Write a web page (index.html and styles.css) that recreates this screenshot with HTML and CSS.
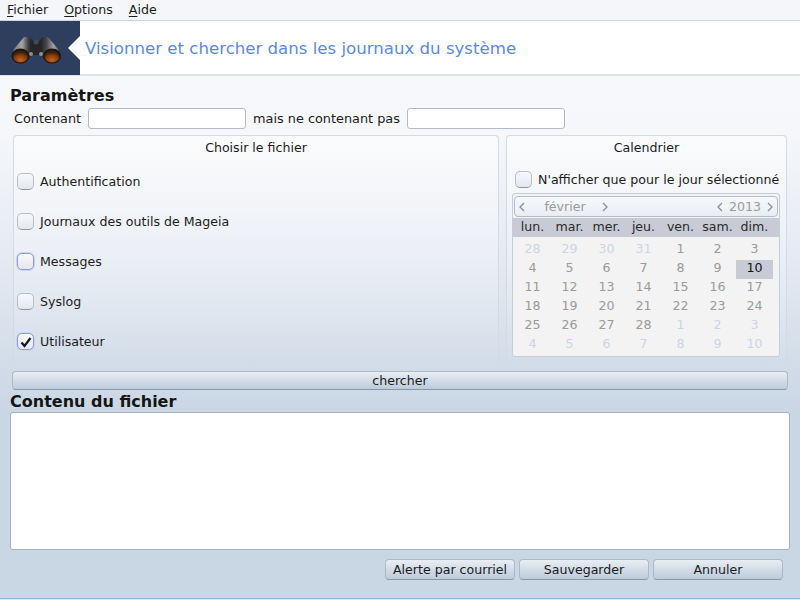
FILE: index.html
```html
<!DOCTYPE html>
<html lang="fr">
<head>
<meta charset="utf-8">
<title>Journaux</title>
<link rel="stylesheet" href="styles.css">
</head>
<body>
<div class="app">
  <nav class="menubar">
    <span class="menu"><u>F</u>ichier</span>
    <span class="menu"><u>O</u>ptions</span>
    <span class="menu"><u>A</u>ide</span>
  </nav>
  <header class="banner">
    <div class="logo">
      <svg width="52" height="40" viewBox="0 0 52 40">
        <defs>
          <linearGradient id="barrel" x1="0" y1="0" x2="1" y2="0"><stop offset="0" stop-color="#6e6e6e"/><stop offset=".45" stop-color="#a8a8a8"/><stop offset=".75" stop-color="#3c3c40"/><stop offset="1" stop-color="#1c1c20"/></linearGradient>
          <linearGradient id="barrelr" x1="0" y1="0" x2="1" y2="0"><stop offset="0" stop-color="#1c1c20"/><stop offset=".35" stop-color="#45454a"/><stop offset=".7" stop-color="#a4a4a4"/><stop offset="1" stop-color="#5a5a5a"/></linearGradient>
          <radialGradient id="lens" cx=".5" cy=".8" r=".65"><stop offset="0" stop-color="#c9621a"/><stop offset=".6" stop-color="#8a400f"/><stop offset="1" stop-color="#3f1f0b"/></radialGradient>
        </defs>
        <path d="M13 9 L19 9 L23 14 L20 30 L1 28 L3 21 Z" fill="url(#barrel)"/>
        <path d="M37 9 L31 9 L28 14 L31 30 L49 28 L47 21 Z" fill="url(#barrelr)"/>
        <path d="M19 13h12v12l-3 2h-6l-3-2z" fill="#26262a"/>
        <circle cx="20" cy="26" r="2" fill="#8f8f93"/>
        <circle cx="30" cy="26" r="2" fill="#8f8f93"/>
        <circle cx="25" cy="14" r="2.5" fill="#4a4a4e"/>
        <ellipse cx="9.5" cy="28" rx="9" ry="7.5" fill="#1b1512"/>
        <ellipse cx="41" cy="28" rx="9" ry="7.5" fill="#1b1512"/>
        <ellipse cx="9.5" cy="28.5" rx="7.5" ry="6" fill="url(#lens)"/>
        <ellipse cx="41" cy="28.5" rx="7.5" ry="6" fill="url(#lens)"/>
      </svg>
      <span class="notch"></span>
    </div>
    <h1 class="title">Visionner et chercher dans les journaux du système</h1>
  </header>
  <main class="content">
    <h2 class="heading">Paramètres</h2>
    <div class="filters">
      <label class="field-label">Contenant</label>
      <input class="entry" type="text">
      <label class="field-label">mais ne contenant pas</label>
      <input class="entry" type="text">
    </div>
    <div class="panels">
      <section class="panel panel-files">
        <div class="panel-title">Choisir le fichier</div>
        <div class="file-list">
          <div class="check-row"><span class="check"></span>Authentification</div>
          <div class="check-row"><span class="check"></span>Journaux des outils de Mageia</div>
          <div class="check-row"><span class="check hover"></span>Messages</div>
          <div class="check-row"><span class="check"></span>Syslog</div>
          <div class="check-row"><span class="check on"><svg width="14" height="14" viewBox="0 0 14 14"><path d="M2.5 7.5 L5.5 11 L11.5 3" fill="none" stroke="#15151a" stroke-width="2.2"/></svg></span>Utilisateur</div>
        </div>
      </section>
      <section class="panel panel-cal">
        <div class="panel-title">Calendrier</div>
        <div class="check-row day-only"><span class="check"></span>N'afficher que pour le jour sélectionné</div>
        <div class="calendar">
          <div class="cal-nav">
            <svg class="chev" width="6" height="10" viewBox="0 0 6 10"><path d="M5 1 L1 5 L5 9"/></svg>
            <span class="month">février</span>
            <svg class="chev" width="6" height="10" viewBox="0 0 6 10"><path d="M1 1 L5 5 L1 9"/></svg>
            <span class="spring"></span>
            <svg class="chev" width="6" height="10" viewBox="0 0 6 10"><path d="M5 1 L1 5 L5 9"/></svg>
            <span class="year">2013</span>
            <svg class="chev" width="6" height="10" viewBox="0 0 6 10"><path d="M1 1 L5 5 L1 9"/></svg>
          </div>
          <div class="cal-grid cal-head">
            <span>lun.</span><span>mar.</span><span>mer.</span><span>jeu.</span><span>ven.</span><span>sam.</span><span>dim.</span>
          </div>
          <div class="cal-grid cal-days">
            <span class="out">28</span><span class="out">29</span><span class="out">30</span><span class="out">31</span><span>1</span><span>2</span><span>3</span>
            <span>4</span><span>5</span><span>6</span><span>7</span><span>8</span><span>9</span><span class="sel">10</span>
            <span>11</span><span>12</span><span>13</span><span>14</span><span>15</span><span>16</span><span>17</span>
            <span>18</span><span>19</span><span>20</span><span>21</span><span>22</span><span>23</span><span>24</span>
            <span>25</span><span>26</span><span>27</span><span>28</span><span class="out">1</span><span class="out">2</span><span class="out">3</span>
            <span class="out">4</span><span class="out">5</span><span class="out">6</span><span class="out">7</span><span class="out">8</span><span class="out">9</span><span class="out">10</span>
          </div>
        </div>
      </section>
    </div>
    <button class="btn search" type="button">chercher</button>
    <h2 class="heading heading-file">Contenu du fichier</h2>
    <div class="textview"></div>
    <div class="actions">
      <button class="btn action" type="button">Alerte par courriel</button>
      <button class="btn action" type="button">Sauvegarder</button>
      <button class="btn action" type="button">Annuler</button>
    </div>
  </main>
</div>
</body>
</html>
```
FILE: styles.css
```css
* { box-sizing: border-box; }
html, body { margin: 0; padding: 0; }
body { width: 800px; height: 600px; overflow: hidden; font-family: "DejaVu Sans", sans-serif; font-size: 12.6px; color: #1c1c1c; background: #dce6ef; }
.app { width: 800px; height: 599px; display: flex; flex-direction: column; background: #c9d6e3; border-bottom: 1px solid #8fb5d6; }
.menubar { height: 20px; display: flex; gap: 16px; padding: 2px 0 0 7px; background: #f4f6fa; line-height: 16px; flex: none; }
.menu u { text-decoration-thickness: 1px; text-underline-offset: 2px; }
.banner { height: 55px; flex: none; display: flex; align-items: center; background: #fff; border-bottom: 2px solid #dbe3ee; margin-top: 1px; }
.logo { width: 80px; height: 54px; background: #2e3e5e; display: flex; align-items: center; padding-left: 11px; position: relative; flex: none; }
.notch { position: absolute; right: 0; top: 15px; width: 0; height: 0; border-top: 12px solid transparent; border-bottom: 12px solid transparent; border-right: 12px solid #fff; }
.title { margin: 0 0 0 5px; font-size: 16.6px; font-weight: 400; color: #5b8bd6; line-height: 56px; height: 54px; white-space: nowrap; }
.content { flex: 1; display: flex; flex-direction: column; padding: 11px 10px 0; background: linear-gradient(#f7f8fb 0, #f5f7fa 60px, #e3e9f2 190px, #c9d6e3 340px); }
.heading { margin: 0; font-size: 16px; font-weight: 700; line-height: 18px; color: #151515; }
.filters { display: flex; align-items: center; margin-top: 3px; height: 21px; padding-left: 4px; font-size: 12.85px; }
.field-label { margin-right: 7px; white-space: nowrap; }
.entry { width: 158px; height: 21px; background: #fff; border: 1px solid #b3bcc6; border-radius: 3px; margin-right: 7px; padding: 0; }
.panels { display: flex; gap: 7px; margin: 6px 3px 0 3px; height: 228px; }
.panel { background: linear-gradient(rgba(255, 255, 255, .55), rgba(255, 255, 255, .3) 90px, rgba(255, 255, 255, 0) 228px); border: 1px solid #d2dae4; border-bottom: 0; border-radius: 4px 4px 0 0; display: flex; flex-direction: column; }
.panel-files { width: 486px; }
.panel-cal { width: 281px; padding: 0 5px; }
.panel-title { text-align: center; height: 27px; padding-top: 4px; line-height: 16px; }
.file-list { display: flex; flex-direction: column; gap: 24px; padding: 10px 0 0 3px; }
.check-row { display: flex; align-items: center; height: 16px; white-space: nowrap; }
.check { width: 17px; height: 17px; margin-right: 6px; margin-top: 1px; border: 1px solid #b9bec6; border-bottom-color: #8f959e; border-radius: 5px; background: linear-gradient(#f7f9fc, #e3e8ef); flex: none; display: flex; align-items: center; justify-content: center; }
.check.hover, .check.on { border: 1px solid #8c9ae0; box-shadow: 0 0 0 1px #ccd2f0; }
.day-only { margin: 8px 0 0 3px; }
.calendar { margin-top: 6px; width: 268px; height: 164px; border: 1px solid #c4ced9; border-radius: 3px; background: #f3f3f3; color: #9a9a9a; display: flex; flex-direction: column; flex: none; }
.cal-nav { height: 21px; margin: 2px 1px 1px 1px; border: 1px solid #b3bdc9; border-radius: 4px; background: linear-gradient(#f7f9fb, #e9edf3); display: flex; align-items: center; padding: 0 4px; color: #9a9a9a; line-height: 18px; flex: none; }
.chev { flex: none; }
.chev path { fill: none; stroke: #8a8f96; stroke-width: 1.3; }
.month { width: 77px; padding-left: 3px; text-align: center; }
.spring { flex: 1; }
.year { margin: 0 6px; }
.cal-grid { display: grid; grid-template-columns: repeat(7, 37px); padding-left: 1px; text-align: center; }
.cal-head { background: #c8cbd6; color: #2a2a2a; height: 19px; line-height: 18px; width: 266px; }
.cal-days { grid-auto-rows: 19px; line-height: 16px; margin-top: 4px; }
.cal-days .out { color: #ccd5e2; }
.cal-days .sel { background: #c8cbd6; color: #111; }
.btn { font: inherit; color: #1c1c1c; border: 1px solid #aeb9c6; border-bottom-color: #8b97a6; border-radius: 4px; background: linear-gradient(#e9eef4, #bccbdb); padding: 0; }
.search { height: 19px; margin: 8px 2px 0 2px; line-height: 16px; flex: none; }
.heading-file { margin-top: 3px; }
.textview { height: 138px; margin-top: 1px; background: #fff; border: 1px solid #a7b2bf; border-radius: 3px; flex: none; }
.actions { display: flex; justify-content: flex-end; gap: 4px; margin-top: 9px; padding-right: 7px; }
.action { width: 130px; height: 21px; }
```
